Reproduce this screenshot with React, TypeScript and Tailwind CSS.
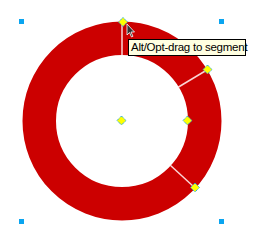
const cx = 122
const cy = 121
const outer = 99.5
const inner = 66

const segmentAngles = [0, 59, 132.5]

const diamonds = [
  [123, 22],
  [207.5, 69.5],
  [195, 187.5],
  [187.5, 120.5],
  [121.5, 120.5],
]

const handles = [
  [19, 19],
  [219, 19],
  [19, 219],
  [219, 219],
]

function polar(angle: number, radius: number) {
  const a = ((angle - 90) * Math.PI) / 180
  return [cx + radius * Math.cos(a), cy + radius * Math.sin(a)]
}

function Diamond({ x, y }: { x: number; y: number }) {
  const s = 4.5
  return (
    <polygon
      points={`${x},${y - s} ${x + s},${y} ${x},${y + s} ${x - s},${y}`}
      fill="#ffff00"
      stroke="#0aa0f0"
      strokeWidth={1}
      strokeDasharray="1.2 0.8"
    />
  )
}

export default function App() {
  return (
    <div className="relative w-[255px] h-[248px] bg-white overflow-hidden">
      <svg width={255} height={248} className="block">
        <circle
          cx={cx}
          cy={cy}
          r={(outer + inner) / 2}
          fill="none"
          stroke="#cc0000"
          strokeWidth={outer - inner}
        />
        {segmentAngles.map((ang) => {
          const [x1, y1] = polar(ang, inner - 0.5)
          const [x2, y2] = polar(ang, outer)
          return (
            <line
              key={ang}
              x1={x1}
              y1={y1}
              x2={x2}
              y2={y2}
              stroke="rgba(255,235,235,0.9)"
              strokeWidth={1.5}
            />
          )
        })}
        {handles.map(([x, y]) => (
          <rect key={`${x}-${y}`} x={x} y={y} width={5} height={5} fill="#0aa5f0" />
        ))}
        {diamonds.map(([x, y]) => (
          <Diamond key={`${x}-${y}`} x={x} y={y} />
        ))}
        {/* mouse cursor */}
        <polygon
          points="127,24 127,35 129.5,32.5 131.5,37 133,36.3 131,32 134.5,32"
          fill="#333"
          stroke="#fff"
          strokeWidth={0.8}
          strokeLinejoin="round"
        />
      </svg>

      <div
        className="absolute left-[128px] top-[39px] w-[118px] h-[17px] border border-black bg-[#ffffe1] pl-[2px] text-[11.5px] tracking-[-0.25px] leading-[15px] text-black whitespace-nowrap"
        style={{ fontFamily: '"Liberation Sans", Arial, sans-serif' }}
      >
        Alt/Opt-drag to segment
      </div>
    </div>
  )
}
